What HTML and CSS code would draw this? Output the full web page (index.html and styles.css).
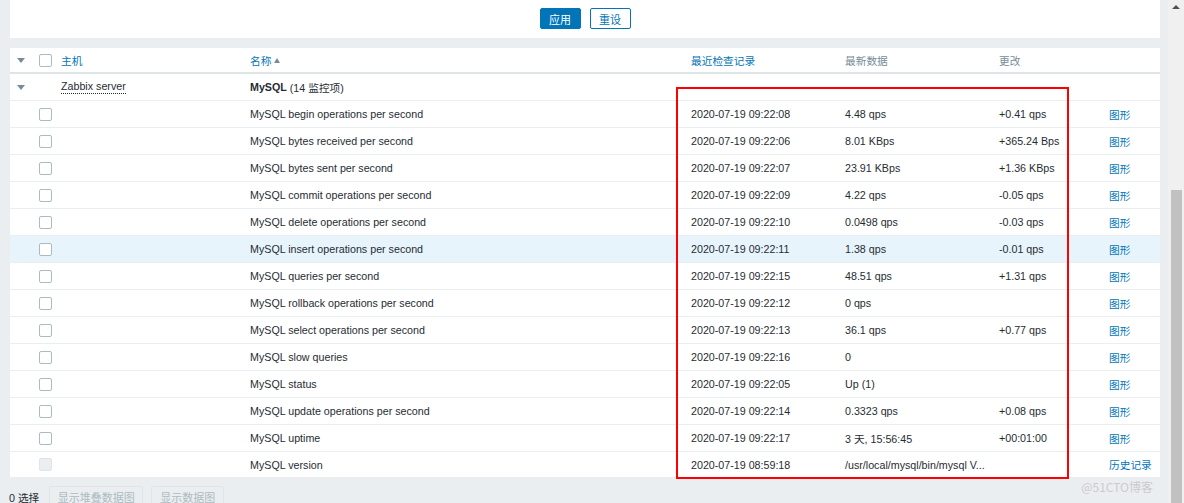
FILE: index.html
```html
<!DOCTYPE html>
<html>
<head>
<meta charset="utf-8">
<link rel="stylesheet" href="styles.css">
</head>
<body>
<div class="main">
  <div class="filter">
    <button class="btn btn-primary">应用</button>
    <button class="btn btn-alt">重设</button>
  </div>
  <div class="panel">
    <div class="row head">
      <div class="c c1"><span class="tri"></span></div>
      <div class="c c2"><span class="cb"></span></div>
      <div class="c c3"><a class="lnk">主机</a></div>
      <div class="c c4"><a class="lnk">名称</a><span class="sort"></span></div>
      <div class="c c5"><a class="lnk">最近检查记录</a></div>
      <div class="c c6 muted">最新数据</div>
      <div class="c c7 muted">更改</div>
      <div class="c c8"></div>
    </div>
    <div class="row group">
      <div class="c c1"><span class="tri"></span></div>
      <div class="c c2"></div>
      <div class="c c3"><span class="dotted">Zabbix server</span></div>
      <div class="c c4"><b>MySQL</b>&nbsp;(14 监控项)</div>
      <div class="c c5"></div><div class="c c6"></div><div class="c c7"></div><div class="c c8"></div>
    </div>
    <div class="row"><div class="c c1"></div><div class="c c2"><span class="cb"></span></div><div class="c c3"></div><div class="c c4">MySQL begin operations per second</div><div class="c c5">2020-07-19 09:22:08</div><div class="c c6">4.48 qps</div><div class="c c7">+0.41 qps</div><div class="c c8"><a class="lnk">图形</a></div></div>
    <div class="row"><div class="c c1"></div><div class="c c2"><span class="cb"></span></div><div class="c c3"></div><div class="c c4">MySQL bytes received per second</div><div class="c c5">2020-07-19 09:22:06</div><div class="c c6">8.01 KBps</div><div class="c c7">+365.24 Bps</div><div class="c c8"><a class="lnk">图形</a></div></div>
    <div class="row"><div class="c c1"></div><div class="c c2"><span class="cb"></span></div><div class="c c3"></div><div class="c c4">MySQL bytes sent per second</div><div class="c c5">2020-07-19 09:22:07</div><div class="c c6">23.91 KBps</div><div class="c c7">+1.36 KBps</div><div class="c c8"><a class="lnk">图形</a></div></div>
    <div class="row"><div class="c c1"></div><div class="c c2"><span class="cb"></span></div><div class="c c3"></div><div class="c c4">MySQL commit operations per second</div><div class="c c5">2020-07-19 09:22:09</div><div class="c c6">4.22 qps</div><div class="c c7">-0.05 qps</div><div class="c c8"><a class="lnk">图形</a></div></div>
    <div class="row"><div class="c c1"></div><div class="c c2"><span class="cb"></span></div><div class="c c3"></div><div class="c c4">MySQL delete operations per second</div><div class="c c5">2020-07-19 09:22:10</div><div class="c c6">0.0498 qps</div><div class="c c7">-0.03 qps</div><div class="c c8"><a class="lnk">图形</a></div></div>
    <div class="row hl"><div class="c c1"></div><div class="c c2"><span class="cb"></span></div><div class="c c3"></div><div class="c c4">MySQL insert operations per second</div><div class="c c5">2020-07-19 09:22:11</div><div class="c c6">1.38 qps</div><div class="c c7">-0.01 qps</div><div class="c c8"><a class="lnk">图形</a></div></div>
    <div class="row"><div class="c c1"></div><div class="c c2"><span class="cb"></span></div><div class="c c3"></div><div class="c c4">MySQL queries per second</div><div class="c c5">2020-07-19 09:22:15</div><div class="c c6">48.51 qps</div><div class="c c7">+1.31 qps</div><div class="c c8"><a class="lnk">图形</a></div></div>
    <div class="row"><div class="c c1"></div><div class="c c2"><span class="cb"></span></div><div class="c c3"></div><div class="c c4">MySQL rollback operations per second</div><div class="c c5">2020-07-19 09:22:12</div><div class="c c6">0 qps</div><div class="c c7"></div><div class="c c8"><a class="lnk">图形</a></div></div>
    <div class="row"><div class="c c1"></div><div class="c c2"><span class="cb"></span></div><div class="c c3"></div><div class="c c4">MySQL select operations per second</div><div class="c c5">2020-07-19 09:22:13</div><div class="c c6">36.1 qps</div><div class="c c7">+0.77 qps</div><div class="c c8"><a class="lnk">图形</a></div></div>
    <div class="row"><div class="c c1"></div><div class="c c2"><span class="cb"></span></div><div class="c c3"></div><div class="c c4">MySQL slow queries</div><div class="c c5">2020-07-19 09:22:16</div><div class="c c6">0</div><div class="c c7"></div><div class="c c8"><a class="lnk">图形</a></div></div>
    <div class="row"><div class="c c1"></div><div class="c c2"><span class="cb"></span></div><div class="c c3"></div><div class="c c4">MySQL status</div><div class="c c5">2020-07-19 09:22:05</div><div class="c c6">Up (1)</div><div class="c c7"></div><div class="c c8"><a class="lnk">图形</a></div></div>
    <div class="row"><div class="c c1"></div><div class="c c2"><span class="cb"></span></div><div class="c c3"></div><div class="c c4">MySQL update operations per second</div><div class="c c5">2020-07-19 09:22:14</div><div class="c c6">0.3323 qps</div><div class="c c7">+0.08 qps</div><div class="c c8"><a class="lnk">图形</a></div></div>
    <div class="row"><div class="c c1"></div><div class="c c2"><span class="cb"></span></div><div class="c c3"></div><div class="c c4">MySQL uptime</div><div class="c c5">2020-07-19 09:22:17</div><div class="c c6">3 天, 15:56:45</div><div class="c c7">+00:01:00</div><div class="c c8"><a class="lnk">图形</a></div></div>
    <div class="row last"><div class="c c1"></div><div class="c c2"><span class="cb disabled"></span></div><div class="c c3"></div><div class="c c4">MySQL version</div><div class="c c5">2020-07-19 08:59:18</div><div class="c c6">/usr/local/mysql/bin/mysql V...</div><div class="c c7"></div><div class="c c8"><a class="lnk">历史记录</a></div></div>
    <div class="redbox"></div>
  </div>
  <div class="footer">
    <span class="sel">0 选择</span>
    <button class="btn btn-dis wide">显示堆叠数据图</button>
    <button class="btn btn-dis">显示数据图</button>
  </div>
  <div class="watermark">@51CTO博客</div>
</div>
<div class="scrollbar">
  <div class="arrow-up"></div>
  <div class="thumb"></div>
</div>
</body>
</html>
```

FILE: styles.css
```css
html, body {
  margin: 0;
  padding: 0;
}
body {
  display: flex;
  width: 1184px;
  height: 503px;
  overflow: hidden;
  font-family: "Liberation Sans", Arial, "Noto Sans CJK SC", sans-serif;
  font-size: 10.7px;
  color: #1f2c33;
}
.main {
  position: relative;
  flex: 1;
  background: #ebeef0;
  padding: 0 8px 0 10px;
}
.filter {
  height: 38px;
  background: #fff;
  display: flex;
  justify-content: center;
  align-items: flex-start;
  gap: 9px;
  padding-top: 8px;
  box-sizing: border-box;
}
.btn {
  font-family: inherit;
  font-size: 11px;
  height: 21px;
  width: 41px;
  border-radius: 2px;
  padding: 0;
  box-sizing: border-box;
  cursor: pointer;
}
.btn-primary {
  background: #0275b8;
  border: 1px solid #0275b8;
  color: #fff;
}
.btn-alt {
  background: #fff;
  border: 1px solid #0275b8;
  color: #0275b8;
}
.panel {
  position: relative;
  margin-top: 10px;
  background: #fff;
}
.row {
  display: grid;
  grid-template-columns: 29px 22px 189px 441px 154px 154px 110px 51px;
  height: 27px;
  border-bottom: 1px solid #ebeef0;
  box-sizing: border-box;
  align-items: center;
  white-space: nowrap;
}
.row.head {
  height: 26px;
  border-bottom: 2px solid #dfe4e7;
}
.row.last {
  height: 25px;
  border-bottom: none;
}
.row.hl {
  background: #e8f4fc;
}
.c {
  display: flex;
  align-items: center;
  overflow: visible;
}
.c1 {
  padding-left: 7px;
}
.tri {
  width: 0;
  height: 0;
  border-left: 4px solid transparent;
  border-right: 4px solid transparent;
  border-top: 5px solid #768d99;
}
.cb {
  display: inline-block;
  width: 13px;
  height: 13px;
  border: 1px solid #acbbc2;
  border-radius: 2px;
  background: #fff;
  box-sizing: border-box;
}
.cb.disabled {
  background: #ebeef0;
  border-color: #dfe4e7;
}
.lnk {
  color: #0275b8;
  text-decoration: none;
}
.muted {
  color: #768d99;
}
.sort {
  width: 0;
  height: 0;
  margin-left: 3px;
  border-left: 3px solid transparent;
  border-right: 3px solid transparent;
  border-bottom: 5px solid #768d99;
}
.dotted {
  border-bottom: 1px dotted #1f2c33;
  line-height: 13px;
}
.redbox {
  position: absolute;
  left: 666px;
  top: 39px;
  width: 393px;
  height: 392px;
  border: 2px solid #f00;
  box-sizing: border-box;
  pointer-events: none;
}
.footer {
  display: flex;
  align-items: center;
  gap: 8px;
  margin-top: 9px;
  margin-left: -1px;
}
.sel {
  margin-right: 2px;
}
.btn-dis {
  background: #ebeef0;
  border: 1px solid #dfe4e7;
  color: #acbbc2;
  width: 73px;
  height: 22px;
}
.btn-dis.wide {
  width: 94px;
}
.watermark {
  position: absolute;
  right: 15px;
  bottom: 8px;
  font-size: 12px;
  color: #cbcbcb;
  font-family: "Noto Sans CJK SC", sans-serif;
}
.scrollbar {
  width: 16px;
  background: #f0f0f0;
  position: relative;
  display: flex;
  flex-direction: column;
  align-items: center;
}
.arrow-up {
  margin-top: 5px;
  width: 0;
  height: 0;
  border-left: 4px solid transparent;
  border-right: 4px solid transparent;
  border-bottom: 4px solid #505050;
}
.thumb {
  margin-top: 181px;
  width: 11px;
  flex: 1;
  background: #c1c1c1;
}
```
